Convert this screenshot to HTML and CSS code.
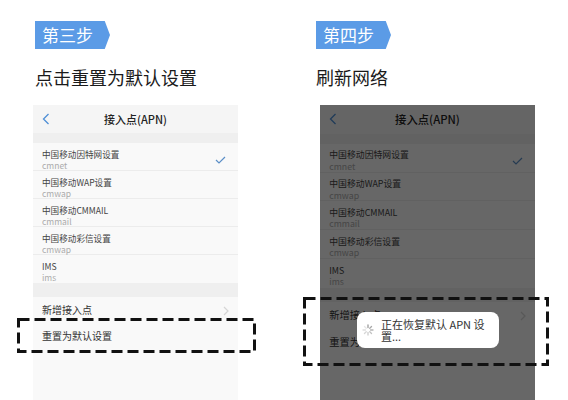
FILE: index.html
```html
<!DOCTYPE html>
<html lang="zh-CN">

<head>
  <title>重置 APN</title>
  <meta charset="UTF-8">
  <meta name="viewport" content="width=device-width, initial-scale=1">
  <link rel="stylesheet" href="styles.css">
</head>

<body>
  <div class="page">

    <!-- Step 3 -->
    <section class="step step-left">
      <div class="badge">第三步</div>
      <h2 class="title">点击重置为默认设置</h2>

      <div class="phone">
        <div class="bar">
          <svg class="back" width="8" height="12" viewBox="0 0 8 12">
            <path d="M6.5 1 L1.5 6 L6.5 11" fill="none" stroke="#4f8fd6" stroke-width="1.3" />
          </svg>
          <span class="bar-title">接入点(APN)</span>
        </div>
        <ul class="apn-list">
          <li>
            <div class="name">中国移动因特网设置</div>
            <div class="sub">cmnet</div>
            <svg class="check" width="11" height="8" viewBox="0 0 11 8">
              <path d="M1 4 L4 7 L10 1" fill="none" stroke="#5b8fc7" stroke-width="1.2" />
            </svg>
          </li>
          <li>
            <div class="name">中国移动WAP设置</div>
            <div class="sub">cmwap</div>
          </li>
          <li>
            <div class="name">中国移动CMMAIL</div>
            <div class="sub">cmmail</div>
          </li>
          <li>
            <div class="name">中国移动彩信设置</div>
            <div class="sub">cmwap</div>
          </li>
          <li>
            <div class="name">IMS</div>
            <div class="sub">ims</div>
          </li>
        </ul>
        <ul class="actions">
          <li>新增接入点
            <svg class="more" width="6" height="10" viewBox="0 0 6 10">
              <path d="M1 1 L5 5 L1 9" fill="none" stroke="#d6d6d6" stroke-width="1.2" />
            </svg>
          </li>
          <li>重置为默认设置</li>
        </ul>
      </div>

      <svg class="dash dash-left" width="239" height="35">
        <rect x="1.5" y="1.5" width="236" height="32" fill="none" stroke="#111" stroke-width="3"
          stroke-dasharray="11 5" />
      </svg>
    </section>

    <!-- Step 4 -->
    <section class="step step-right">
      <div class="badge">第四步</div>
      <h2 class="title">刷新网络</h2>

      <div class="phone dimmed">
        <div class="bar">
          <svg class="back" width="8" height="12" viewBox="0 0 8 12">
            <path d="M6.5 1 L1.5 6 L6.5 11" fill="none" stroke="#4f8fd6" stroke-width="1.3" />
          </svg>
          <span class="bar-title">接入点(APN)</span>
        </div>
        <ul class="apn-list">
          <li>
            <div class="name">中国移动因特网设置</div>
            <div class="sub">cmnet</div>
            <svg class="check" width="11" height="8" viewBox="0 0 11 8">
              <path d="M1 4 L4 7 L10 1" fill="none" stroke="#5b8fc7" stroke-width="1.2" />
            </svg>
          </li>
          <li>
            <div class="name">中国移动WAP设置</div>
            <div class="sub">cmwap</div>
          </li>
          <li>
            <div class="name">中国移动CMMAIL</div>
            <div class="sub">cmmail</div>
          </li>
          <li>
            <div class="name">中国移动彩信设置</div>
            <div class="sub">cmwap</div>
          </li>
          <li>
            <div class="name">IMS</div>
            <div class="sub">ims</div>
          </li>
        </ul>
        <ul class="actions">
          <li>新增接入点
            <svg class="more" width="6" height="10" viewBox="0 0 6 10">
              <path d="M1 1 L5 5 L1 9" fill="none" stroke="#d6d6d6" stroke-width="1.2" />
            </svg>
          </li>
          <li>重置为默认设置</li>
        </ul>
      </div>

      <!-- loading toast -->
      <div class="toast">
        <svg class="spinner" width="12" height="12" viewBox="-6 -6 12 12">
          <g stroke-width="1.3" stroke-linecap="round">
            <line x1="0" y1="-2.5" x2="0" y2="-5" stroke="#9a9a9a" />
            <line x1="0" y1="-2.5" x2="0" y2="-5" stroke="#a8a8a8" transform="rotate(45)" />
            <line x1="0" y1="-2.5" x2="0" y2="-5" stroke="#b5b5b5" transform="rotate(90)" />
            <line x1="0" y1="-2.5" x2="0" y2="-5" stroke="#c2c2c2" transform="rotate(135)" />
            <line x1="0" y1="-2.5" x2="0" y2="-5" stroke="#cdcdcd" transform="rotate(180)" />
            <line x1="0" y1="-2.5" x2="0" y2="-5" stroke="#d6d6d6" transform="rotate(225)" />
            <line x1="0" y1="-2.5" x2="0" y2="-5" stroke="#dedede" transform="rotate(270)" />
            <line x1="0" y1="-2.5" x2="0" y2="-5" stroke="#e6e6e6" transform="rotate(315)" />
          </g>
        </svg>
        <p class="toast-text">正在恢复默认 APN 设置...</p>
      </div>

      <svg class="dash dash-right" width="246" height="69">
        <rect x="1.5" y="1.5" width="243" height="66" fill="none" stroke="#111" stroke-width="3"
          stroke-dasharray="11 5" />
      </svg>
    </section>

  </div>
</body>

</html>
```

FILE: styles.css
```css
* {
  box-sizing: border-box;
}

body {
  margin: 0;
  background-color: #ffffff;
  font-family: "Noto Sans CJK SC", "Noto Sans", sans-serif;
  color: #222;
}

.page {
  display: grid;
  grid-template-columns: 284px 284px;
  height: 400px;
  overflow: hidden;
}

/* one column per step */
.step {
  position: relative;
  padding-top: 21px;
}

.step-left {
  padding-left: 35px;
}

.step-right {
  padding-left: 32px;
}

/* Blue arrow label */
.badge {
  width: 75px;
  height: 28px;
  padding-left: 7px;
  background-color: #5b9be6;
  color: #ffffff;
  font-size: 17px;
  font-weight: 400;
  line-height: 28px;
  clip-path: polygon(0 0, 93% 0, 100% 50%, 93% 100%, 0 100%);
}

.title {
  margin: 18px 0 0;
  font-size: 18px;
  font-weight: 400;
  line-height: 20px;
  color: #1a1a1a;
}

/* Phone screenshot, sized in em so both copies scale */
.phone {
  position: relative;
  margin-top: 18px;
  font-size: 10px;
  width: 205px;
  height: 300px;
  background-color: #f9f9f9;
}

.step-left .phone {
  margin-left: -2px;
}

.step-right .phone {
  margin-left: 4px;
  width: 215px;
  font-size: 10.3px;
}

.bar {
  position: relative;
  height: 2.8em;
  display: flex;
  align-items: center;
  justify-content: center;
  background-color: #f5f5f5;
  border-bottom: 1em solid #efefef;
  box-sizing: content-box;
}

.back {
  position: absolute;
  left: 0.9em;
  top: 0.8em;
}

.bar-title {
  font-size: 1.1em;
  font-weight: 500;
  color: #222;
}

.apn-list,
.actions {
  list-style: none;
  margin: 0;
  padding: 0;
}

.apn-list {
  border-bottom: 1.4em solid #efefef;
}

.apn-list li {
  position: relative;
  height: 2.8em;
  padding: 0.55em 0 0 0.9em;
  border-bottom: 1px solid #ececec;
}

.apn-list li:last-child {
  border-bottom: none;
}

.name {
  font-size: 0.86em;
  line-height: 1.28em;
  color: #444;
}

.sub {
  font-size: 0.85em;
  line-height: 1.3em;
  color: #ababab;
}

.check {
  position: absolute;
  right: 1.2em;
  top: 1.3em;
}

.actions li {
  position: relative;
  height: 2.6em;
  padding-left: 0.9em;
  font-size: 1em;
  line-height: 2.6em;
  color: #333;
}

.more {
  position: absolute;
  right: 0.9em;
  top: 0.85em;
}

/* gray layer while the reset runs */
.dimmed::after {
  content: "";
  position: absolute;
  top: 0;
  left: 0;
  right: 0;
  bottom: 0;
  background-color: rgba(0, 0, 0, 0.59);
}

.toast {
  position: absolute;
  left: 73px;
  top: 312px;
  width: 142px;
  height: 36px;
  display: flex;
  align-items: center;
  gap: 7px;
  padding: 0 6px 0 5px;
  background-color: #ffffff;
  border-radius: 8px;
}

.toast-text {
  margin: 0;
  width: 108px;
  font-size: 11px;
  line-height: 12px;
  color: #333;
}

/* dashed highlight frames */
.dash {
  position: absolute;
}

.dash-left {
  left: 17px;
  top: 318px;
}

.dash-right {
  left: 19px;
  top: 297px;
}
```
